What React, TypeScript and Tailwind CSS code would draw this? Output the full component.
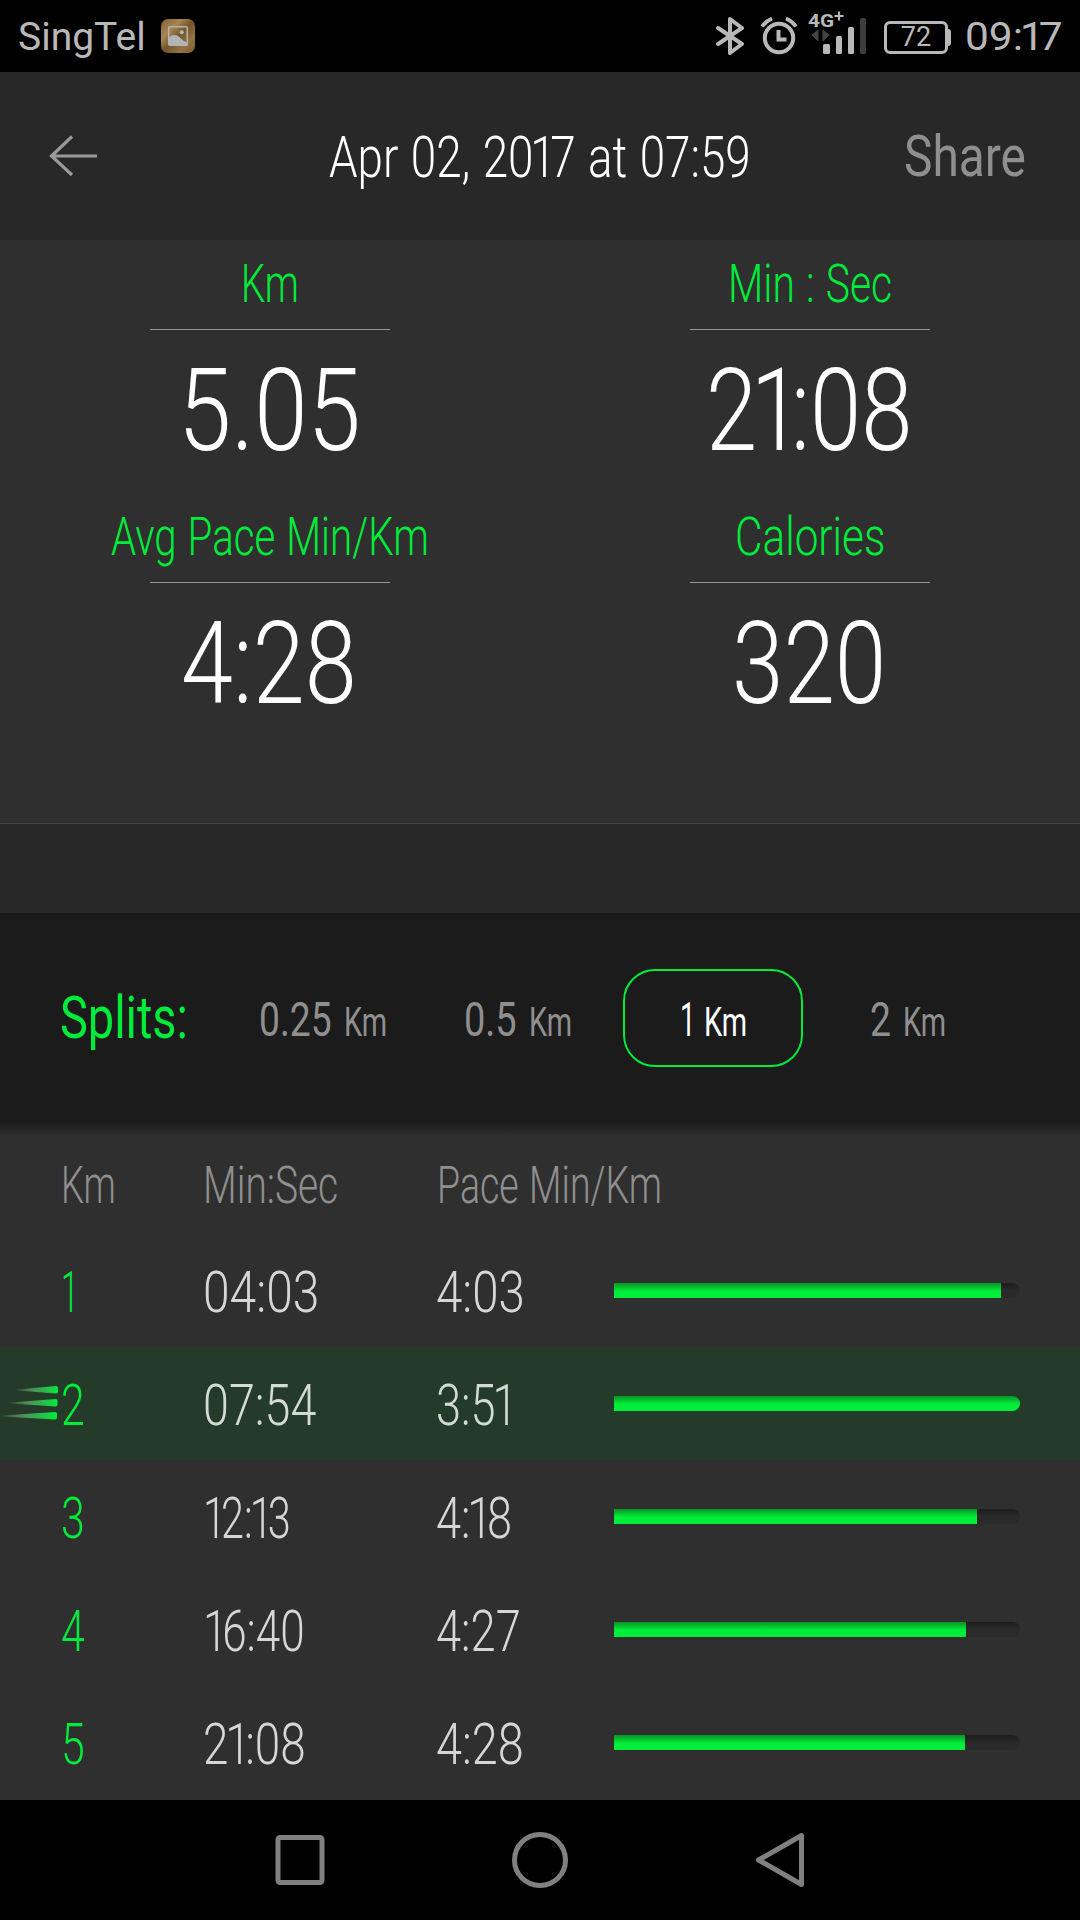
import React, { useLayoutEffect, useRef, useState } from "react";
import clsx from "clsx";

interface CondensedProps {
  text: string;
  width: number;
  className?: string;
}

/* Narrow display text: squeezes the glyphs horizontally into the given width */
function Condensed({ text, width, className }: CondensedProps) {
  const ref = useRef<HTMLSpanElement>(null);
  const [scale, setScale] = useState(0.75);

  useLayoutEffect(() => {
    if (ref.current) setScale(width / ref.current.offsetWidth);
  }, [text, width]);

  // the figure 1 is set tighter than the other figures
  const parts = text.split(/(1|.(?=1))/).filter(Boolean);

  return (
    <span className={clsx("inline-block shrink-0 whitespace-pre", className)} style={{ width }}>
      <span ref={ref} className="inline-block origin-left" style={{ transform: `scaleX(${scale})` }}>
        {parts.map((part, i) => (
          <span
            key={i}
            className={clsx(
              part === "1" && "tracking-[-0.12em]",
              part !== "1" && parts[i + 1] === "1" && "tracking-[-0.07em]"
            )}
          >
            {part}
          </span>
        ))}
      </span>
    </span>
  );
}

const stats = [
  { label: "Km", labelWidth: 58, value: "5.05", valueWidth: 183 },
  { label: "Min : Sec", labelWidth: 164, value: "21:08", valueWidth: 206 },
  { label: "Avg Pace Min/Km", labelWidth: 318, value: "4:28", valueWidth: 176 },
  { label: "Calories", labelWidth: 150, value: "320", valueWidth: 154 },
];

const ranges = [
  { value: "0.25", valueWidth: 73, active: false },
  { value: "0.5", valueWidth: 53, active: false },
  { value: "1", valueWidth: 12, active: true },
  { value: "2", valueWidth: 21, active: false },
];

const splits = [
  { km: "1", kmWidth: 14, time: "04:03", timeWidth: 116, pace: "4:03", paceWidth: 89, bar: 387 },
  { km: "2", kmWidth: 24, time: "07:54", timeWidth: 113, pace: "3:51", paceWidth: 76, bar: 406 },
  { km: "3", kmWidth: 24, time: "12:13", timeWidth: 88, pace: "4:18", paceWidth: 76, bar: 363 },
  { km: "4", kmWidth: 24, time: "16:40", timeWidth: 102, pace: "4:27", paceWidth: 85, bar: 352 },
  { km: "5", kmWidth: 24, time: "21:08", timeWidth: 103, pace: "4:28", paceWidth: 88, bar: 351 },
];

function StatusBar() {
  return (
    <div className="h-[72px] bg-black flex items-center justify-between pl-[18px] pr-[17px] text-[39px] text-[#b8b8b8]">
      <div className="flex items-center">
        <Condensed text="SingTel" width={128} className="mt-0.5" />
        <svg width="34" height="34" viewBox="0 0 34 34" className="ml-[15px]">
          <defs>
            <linearGradient id="gold" x1="0" y1="0" x2="1" y2="1">
              <stop offset="0" stopColor="#80602f" />
              <stop offset="0.3" stopColor="#a88652" />
              <stop offset="0.5" stopColor="#73552a" />
              <stop offset="0.75" stopColor="#957342" />
              <stop offset="1" stopColor="#775a2f" />
            </linearGradient>
          </defs>
          <rect width="34" height="34" rx="7" fill="url(#gold)" />
          <rect x="7.7" y="7.7" width="18.6" height="18.6" rx="1" fill="none" stroke="#b5b5b0" strokeWidth="1.5" />
          <circle cx="20.7" cy="13.3" r="2" fill="#b5b8b8" />
          <path d="M8 18.500q3-3.500 8-2c4 2 4 4.500 10 7v3H8z" fill="#b0b6b8" />
        </svg>
      </div>

      <div className="flex items-center">
        <svg width="170" height="72" viewBox="0 0 170 72" fill="none">
          {/* bluetooth */}
          <path d="M2 28l24 16-12 9V19l12 9L2 44" stroke="#b8b8b8" strokeWidth="4" strokeLinejoin="round" strokeLinecap="round" />
          {/* alarm */}
          <g stroke="#b8b8b8" strokeLinecap="butt">
            <circle cx="63" cy="38" r="14.200" strokeWidth="4" />
            <path d="M62.500 30v9.500h8" strokeWidth="4" />
            <path d="M46 26.500q4-5.500 10-8M80 26.500q-4-5.500-10-8" strokeWidth="3.600" />
          </g>
          {/* data arrows */}
          <path d="M96 35l6-5v11zM113 35l-6-5v11z" fill="#444" stroke="#444" />
          {/* signal */}
          <rect x="107" y="44" width="7" height="10" rx="1.500" fill="#b8b8b8" />
          <rect x="120" y="36" width="6" height="18" rx="1.500" fill="#b8b8b8" />
          <rect x="132" y="27" width="6" height="27" rx="1.500" fill="#b8b8b8" />
          <rect x="144" y="18" width="6" height="36" rx="1.500" fill="#3d3d3d" />
          <text x="92" y="26.500" fontSize="19" fontWeight="700" fill="#b8b8b8" textLength="26" lengthAdjust="spacingAndGlyphs">4G</text>
          <path d="M118.500 16h9M123 11.500v9" stroke="#b8b8b8" strokeWidth="2.200" />
        </svg>
        <div className="w-16 h-[33px] mt-[3px] -ml-[2px] border-[3px] border-[#b8b8b8] rounded-md flex items-center justify-center text-[27px] leading-none">
          72
        </div>
        <div className="w-[3px] h-[17px] bg-[#b8b8b8] rounded-r-sm mr-[14px] mt-[3px]" />
        <Condensed text="09:17" width={98} className="mt-[3px]" />
      </div>
    </div>
  );
}

function Header() {
  return (
    <header className="h-[168px] bg-[#282828] grid grid-cols-[329px_1fr_176px] items-center pt-0.5 text-[58px]">
      <svg width="50" height="44" viewBox="0 0 50 44" fill="none" stroke="#999" strokeWidth="3.200" className="ml-12 -mt-0.5">
        <path d="M24 2.500L3.500 22l20.500 19M3.500 22H49" />
      </svg>
      <Condensed text="Apr 02, 2017 at 07:59" width={422} className="text-white" />
      <Condensed text="Share" width={122} className="text-[#8f8f8f] font-normal -mt-0.5" />
    </header>
  );
}

function Stats() {
  return (
    <section className="h-[584px] bg-[#2f2f2f] border-b border-[#434343] grid grid-cols-2 auto-rows-[253px]">
      {stats.map((stat) => (
        <div key={stat.label} className="flex flex-col items-center">
          <div className="text-[53px] leading-[89px] text-[#00ec3a]">
            <Condensed text={stat.label} width={stat.labelWidth} />
          </div>
          <div className="w-60 h-px bg-[#969696]" />
          <div className="text-[115px] leading-[162px] text-white">
            <Condensed text={stat.value} width={stat.valueWidth} className="-ml-0.5" />
          </div>
        </div>
      ))}
    </section>
  );
}

function SplitPicker() {
  return (
    <section className="h-[210px] bg-[#1b1b1b] flex items-center pl-[60px]">
      <Condensed text="Splits:" width={128} className="text-[59px] text-[#00ec3a] font-normal" />
      <div className="flex gap-[15px] ml-[45px]">
        {ranges.map((range) => (
          <div
            key={range.value}
            className={clsx(
              "w-[180px] h-[98px] rounded-[32px] border-2 flex items-center justify-center pt-[3px] font-normal",
              range.active ? "border-[#00ec3a] text-white" : "border-transparent text-[#8f8f8f]"
            )}
          >
            <div className="flex items-baseline gap-3">
              <Condensed text={range.value} width={range.valueWidth} className="text-[48px]" />
              <Condensed text="Km" width={43} className="text-[41px]" />
            </div>
          </div>
        ))}
      </div>
    </section>
  );
}

function SpeedLines() {
  return (
    <svg width="60" height="40" viewBox="0 0 60 40" className="absolute left-0 top-9">
      <defs>
        <linearGradient id="trail">
          <stop offset="0" stopColor="#8ab88f" stopOpacity="0.1" />
          <stop offset="0.4" stopColor="#57a765" stopOpacity="0.8" />
          <stop offset="1" stopColor="#00ec3a" />
        </linearGradient>
      </defs>
      <g fill="url(#trail)">
        <path d="M17 6.500L56 3q2 0 2 2v3.500q0 2-2 2L17 7.500z" />
        <path d="M10 19.500L56 16q1.500 0 1.500 2v3.500q0 2-2 2L10 20.500z" />
        <path d="M2 32.500L55 29q2 0 2 2v3.500q0 2-2 2L2 33.500z" />
      </g>
    </svg>
  );
}

function SplitTable() {
  return (
    <section className="bg-[#2f2f2f] pb-px">
      <div className="h-[13px] bg-linear-to-b from-[#1d1d1d] to-[#2f2f2f]" />
      <div className="h-[98px] grid grid-cols-[142px_234px_1fr] items-center pl-[61px] pt-0.5 text-[51px] text-[#8f8f8f]">
        <Condensed text="Km" width={55} />
        <Condensed text="Min:Sec" width={135} />
        <Condensed text="Pace Min/Km" width={225} />
      </div>
      {splits.map((split) => {
        const best = split.km === "2";
        return (
          <div
            key={split.km}
            className={clsx(
              "relative h-[113px] grid grid-cols-[142px_233px_178px_406px] items-center pl-[61px] pt-1 text-[57px]",
              best ? "bg-[#243b2a] text-[#d3dbd4]" : "text-[#d6d6d6]"
            )}
          >
            {best && <SpeedLines />}
            <Condensed text={split.km} width={split.kmWidth} className="text-[#00ec3a]" />
            <Condensed text={split.time} width={split.timeWidth} />
            <Condensed text={split.pace} width={split.paceWidth} />
            <div className="h-[15px] -mt-1 rounded-r-full overflow-hidden bg-linear-to-b from-[#1d1d1d] to-[#2a2a2a] to-50%">
              <div
                className="h-full bg-linear-to-b from-[#079525] to-[#00ee3a] to-55%"
                style={{ width: split.bar }}
              />
            </div>
          </div>
        );
      })}
    </section>
  );
}

function NavBar() {
  return (
    <nav className="flex-1 bg-black flex items-center justify-center gap-[180px]">
      <svg width="60" height="60" viewBox="0 0 60 60" fill="none" stroke="#808080" strokeWidth="5">
        <rect x="8" y="7.500" width="44" height="45" rx="2" />
      </svg>
      <svg width="60" height="60" viewBox="0 0 60 60" fill="none" stroke="#808080" strokeWidth="5">
        <circle cx="30" cy="30" r="25.500" />
      </svg>
      <svg width="60" height="60" viewBox="0 0 60 60" fill="none" stroke="#808080" strokeWidth="5" strokeLinejoin="round">
        <path d="M51.500 5.500v49L8.500 30z" />
      </svg>
    </nav>
  );
}

export default function App() {
  return (
    <div className="w-[1080px] h-[1920px] flex flex-col overflow-hidden bg-[#2f2f2f] font-['Roboto',sans-serif]">
      <StatusBar />
      <div className="font-[350] [word-spacing:0.1em]">
        <Header />
        <Stats />
        <div className="h-[89px] bg-[#282828]" />
        <SplitPicker />
        <SplitTable />
      </div>
      <NavBar />
    </div>
  );
}
